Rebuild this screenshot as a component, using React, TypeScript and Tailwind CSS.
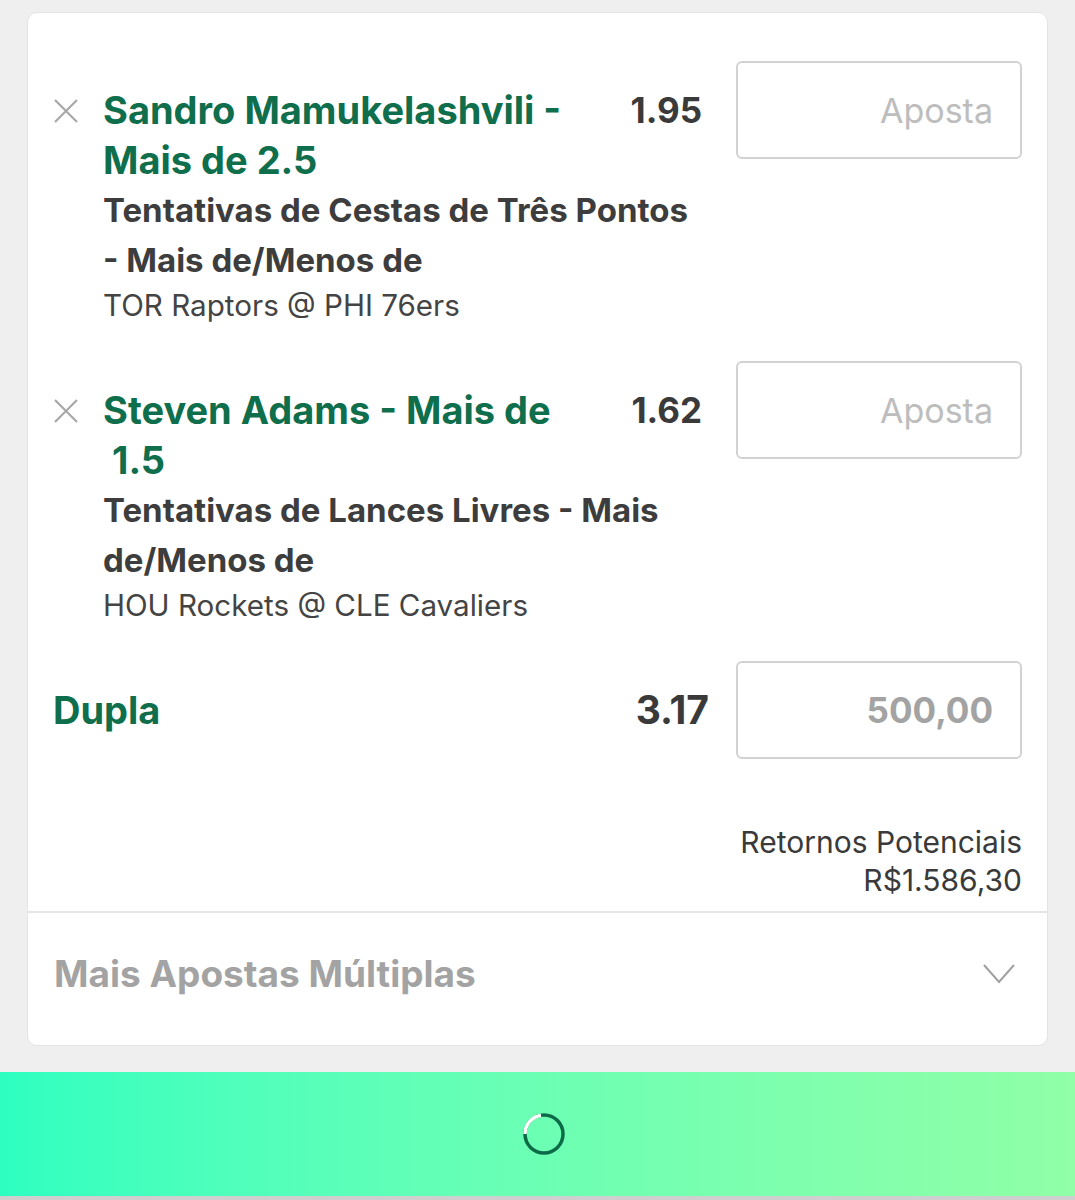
import React from 'react'

const green = 'text-[#0f6e4b]'

const CloseIcon = () => (
  <svg width="26" height="26" viewBox="0 0 26 26" fill="none" stroke="#a8a8a8" strokeWidth="2.2">
    <path d="M2 2 L24 24 M24 2 L2 24" />
  </svg>
)

const StakeBox = ({ value, bold }: { value: string; bold?: boolean }) => (
  <div
    className={`w-[286px] h-[98px] shrink-0 rounded-[6px] border-2 border-[#d2d2d2] flex items-center justify-end pr-[27px] ${
      bold ? 'text-[35px] font-bold text-[#a3a3a3]' : 'text-[34px] text-[#bdbdbd]'
    }`}
  >
    {value}
  </div>
)

type Bet = { title: string; odds: string; market: string; game: string }

const bets: Bet[] = [
  {
    title: 'Sandro Mamukelashvili - Mais de 2.5',
    odds: '1.95',
    market: 'Tentativas de Cestas de Três Pontos - Mais de/Menos de',
    game: 'TOR Raptors @ PHI 76ers',
  },
  {
    title: 'Steven Adams - Mais de \u00a01.5',
    odds: '1.62',
    market: 'Tentativas de Lances Livres - Mais de/Menos de',
    game: 'HOU Rockets @ CLE Cavaliers',
  },
]

const BetRow = ({ bet }: { bet: Bet }) => (
  <div className="flex items-start pb-[36px]">
    <div className="w-[52px] shrink-0 pt-[37px]">
      <CloseIcon />
    </div>
    <div className="w-[600px] shrink-0 pt-[24px] -ml-[2px]">
      <div className="flex justify-between">
        <p className={`w-[490px] text-[38px] leading-[50px] font-bold ${green}`}>{bet.title}</p>
        <p className="text-[35px] leading-[50px] font-bold text-[#3a3a3a] pr-[1px]">{bet.odds}</p>
      </div>
      <p className="text-[33px] leading-[50px] font-bold text-[#3d3d3d]">{bet.market}</p>
      <p className="text-[29.6px] leading-[40px] text-[#444]">{bet.game}</p>
    </div>
    <div className="ml-auto">
      <StakeBox value="Aposta" />
    </div>
  </div>
)

const Spinner = () => (
  <svg width="48" height="48" viewBox="0 0 48 48" fill="none">
    <circle cx="24" cy="24" r="19" stroke="#0d6a48" strokeWidth="3.5" />
    <path d="M5 24 A19 19 0 0 1 21 5.2" stroke="#ffffff" strokeWidth="3.5" />
  </svg>
)

export default function App() {
  return (
    <div className="min-h-[1200px] bg-[#efefef] pt-[12px]" style={{ fontFamily: 'Inter, "Liberation Sans", sans-serif' }}>
      <div className="mx-[27px] rounded-[10px] bg-white border border-[#e4e4e4]">
        <div className="pt-[48px] pl-[25px] pr-[25px]">
          {bets.map((b) => (
            <BetRow key={b.odds} bet={b} />
          ))}
          <div className="flex items-center">
            <p className={`text-[38px] font-bold ${green}`}>Dupla</p>
            <p className="ml-auto mr-[27px] text-[39px] font-bold text-[#3a3a3a]">3.17</p>
            <StakeBox value="500,00" bold />
          </div>
          <div className="mt-[64px] pb-[12px] text-right text-[30px] leading-[38px] text-[#3a3a3a]">
            <p>Retornos Potenciais</p>
            <p>R$1.586,30</p>
          </div>
        </div>
        <div className="border-t-2 border-[#e6e6e6] flex items-center justify-between pl-[26px] pr-[32px] pt-[36px] pb-[46px]">
          <p className="text-[37px] leading-[50px] font-bold text-[#a3a3a3]">Mais Apostas Múltiplas</p>
          <svg width="32" height="20" viewBox="0 0 32 20" fill="none" stroke="#a0a0a0" strokeWidth="2">
            <path d="M1 1 L16 18 L31 1" />
          </svg>
        </div>
      </div>
      <div className="mt-[26px] h-[128px] bg-gradient-to-r from-[#2dffc0] to-[#90ffa7] border-b-4 border-[#cfcfcf] flex items-center justify-center pl-[12px]">
        <Spinner />
      </div>
    </div>
  )
}
